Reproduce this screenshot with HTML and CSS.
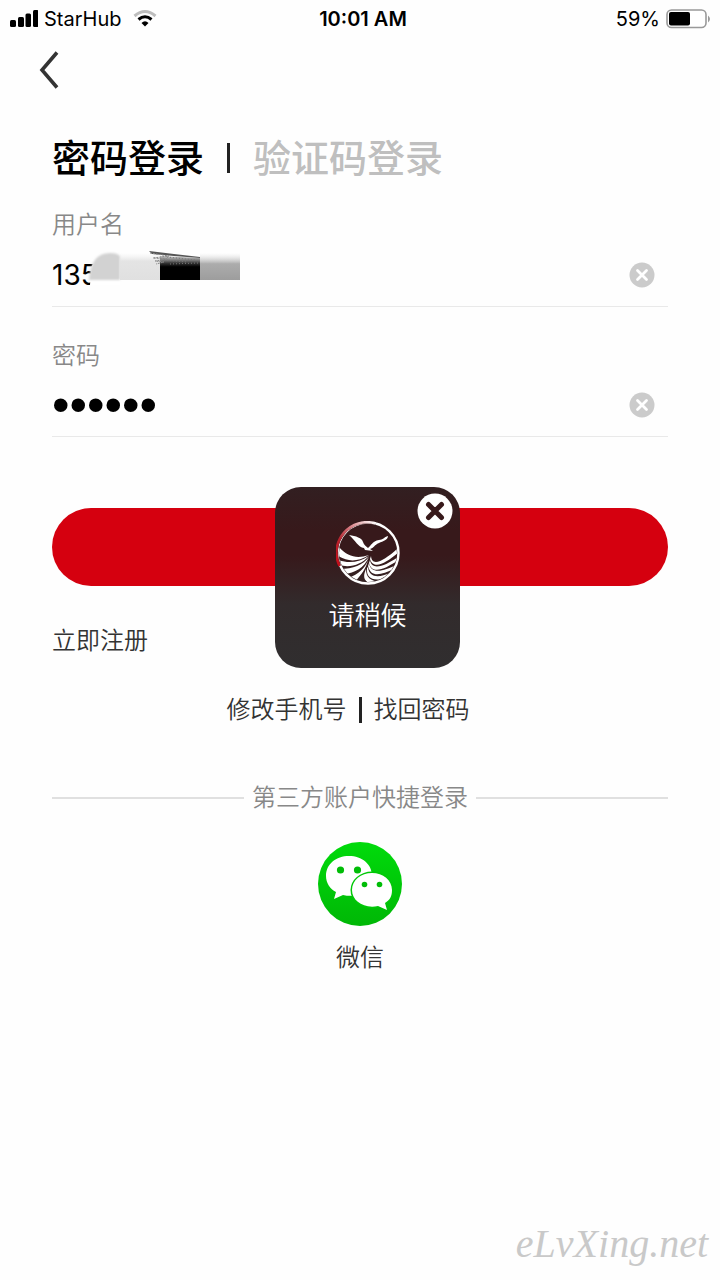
FILE: index.html
```html
<!DOCTYPE html>
<html lang="zh-CN">
<head>
<meta charset="utf-8">
<meta name="viewport" content="width=device-width, initial-scale=1">
<title>密码登录</title>
<link rel="stylesheet" href="styles.css">
</head>
<body>
<div class="screen">
  <header class="status">
    <div class="status-left">
      <svg class="signal" width="30" height="20" viewBox="0 0 30 20" aria-hidden="true"><rect x="2" y="11" width="6" height="7" rx="1.500"/><rect x="10" y="8" width="6" height="10" rx="1.500"/><rect x="17.500" y="4.500" width="5.500" height="13.500" rx="1.500"/><rect x="25" y="1" width="5.500" height="17" rx="1.500"/></svg>
      <span>StarHub</span>
      <svg class="wifi" width="24" height="20" viewBox="0 0 24 20" fill="none" stroke-width="3" aria-hidden="true"><path d="M1.500 7Q12-2 22.500 7" stroke="#bdbdbd"/><path d="M5.500 10.500Q12 5 18.500 10.500" stroke="#000"/><path d="M8.500 14Q12 10.500 15.500 14L12 17.500Z" fill="#000"/></svg>
    </div>
    <strong class="time">10:01 AM</strong>
    <div class="status-right">
      <span>59%</span>
      <svg width="46" height="20" viewBox="0 0 46 20" aria-hidden="true"><rect x="1" y="1" width="39" height="17.500" rx="4.500" fill="#fff" stroke="#999" stroke-width="1.600"/><rect x="3" y="3" width="21" height="13.500" rx="2" fill="#000"/><path d="M42 6.500Q46 10 42 13.500Z" fill="#999"/></svg>
    </div>
  </header>

  <nav class="nav">
    <button class="back" type="button" aria-label="返回">
      <svg width="20" height="38" viewBox="0 0 20 38" fill="none" stroke="#333" stroke-width="3.600" aria-hidden="true"><path d="M18 1.500L3 19L18 36.500"/></svg>
    </button>
  </nav>

  <main class="content">
    <div class="tabs">
      <button class="tab tab-active" type="button">密码登录</button>
      <span class="tab-rule"></span>
      <button class="tab" type="button">验证码登录</button>
    </div>

    <form class="form">
      <div class="field field-user">
        <label for="user">用户名</label>
        <div class="field-row">
          <input id="user" type="text" value="135" autocomplete="off">
          <svg class="redaction" width="156" height="36" viewBox="0 0 156 36" aria-hidden="true">
            <defs>
              <linearGradient id="soft" x1="0" y1="0" x2="0" y2="1"><stop offset="0" stop-color="#eee" stop-opacity="0"/><stop offset=".3" stop-color="#e4e4e4"/><stop offset="1" stop-color="#e0e0e0"/></linearGradient>
              <linearGradient id="grey" x1="0" y1="0" x2="0" y2="1"><stop offset="0" stop-color="#ddd" stop-opacity="0"/><stop offset=".4" stop-color="#acacac"/><stop offset="1" stop-color="#9d9d9d"/></linearGradient>
              <linearGradient id="dark" x1="0" y1="0" x2="0" y2="1"><stop offset="0" stop-color="#888" stop-opacity=".5"/><stop offset=".3" stop-color="#333"/><stop offset=".45" stop-color="#000"/></linearGradient>
              <filter id="feather" x="-10%" y="-10%" width="120%" height="120%"><feGaussianBlur stdDeviation=".8"/></filter>
            </defs>
            <path d="M6 36L7 19Q13 2 26 3Q34 4 36 10V36Z" fill="#fff"/>
            <path d="M5 31Q7 3 27 4Q33 4 36 7V31Z" fill="#d2d2d2" filter="url(#feather)"/>
            <rect x="36" y="4" width="40" height="27" fill="url(#soft)"/>
            <path d="M76 31V7L116 9V31Z" fill="url(#dark)"/>
            <path d="M65 2L90 5L116 8V9L90 7L68 5Z" fill="#555"/>
            <path d="M66 4L85 7L69 9L83 10L71 12L80 13L72 15" fill="none" stroke="#888" stroke-dasharray="2 1"/>
            <path d="M83 8L111 11M80 11L103 13M86 15L114 14" stroke="#777" stroke-dasharray="1 2"/>
            <rect x="116" y="4" width="40" height="27" fill="url(#grey)"/>
          </svg>
          <button class="clear" type="button" aria-label="清除用户名"><svg width="26" height="26" viewBox="0 0 26 26" aria-hidden="true"><circle cx="13" cy="13" r="12.500" fill="#cbcbcb"/><path d="M8.500 8.500L17.500 17.500M17.500 8.500L8.500 17.500" stroke="#fff" stroke-width="2.800" stroke-linecap="round"/></svg></button>
        </div>
      </div>
      <div class="field">
        <label for="pass">密码</label>
        <div class="field-row">
          <input id="pass" class="password" type="password" value="123456" autocomplete="off">
          <button class="clear" type="button" aria-label="清除密码"><svg width="26" height="26" viewBox="0 0 26 26" aria-hidden="true"><circle cx="13" cy="13" r="12.500" fill="#cbcbcb"/><path d="M8.500 8.500L17.500 17.500M17.500 8.500L8.500 17.500" stroke="#fff" stroke-width="2.800" stroke-linecap="round"/></svg></button>
        </div>
      </div>
      <div class="submit-area">
        <button class="submit" type="button" aria-label="登录"></button>
        <div class="loading" role="dialog" aria-label="请稍候">
          <button class="loading-close" type="button" aria-label="关闭"><svg width="36" height="36" viewBox="0 0 36 36" aria-hidden="true"><circle cx="18" cy="18" r="17.500" fill="#fff"/><path d="M11.500 11.500L24.500 24.500M24.500 11.500L11.500 24.500" stroke="#37191b" stroke-width="5" stroke-linecap="round"/></svg></button>
          <svg class="emblem" width="64" height="64" viewBox="0 0 64 64" aria-hidden="true">
            <defs>
              <linearGradient id="arc" x1="1" y1="0" x2="0" y2="1"><stop offset="0" stop-color="#fff"/><stop offset=".35" stop-color="#dc8a90"/><stop offset=".65" stop-color="#b3242e"/><stop offset="1" stop-color="#c50d19"/></linearGradient>
              <clipPath id="disc"><circle cx="32" cy="32" r="29"/></clipPath>
            </defs>
            <circle cx="32" cy="32" r="30.500" fill="none" stroke="#fff" stroke-width="2.400"/>
            <path d="M3.500 45A30.500 30.500 0 0 1 40 2.600" fill="none" stroke="#37191b" stroke-width="3"/>
            <path d="M3.500 45A30.500 30.500 0 0 1 40 2.600" fill="none" stroke="url(#arc)" stroke-width="2.600"/>
            <path d="M13 14C20 15 26 17 27 21C28 24 30 25 32 27C35 25 36 20 43 19C47 19 48 16 52 15C52 19 47 20 43 22C38 24 38 27 34 28L37 30L29 29L28 27C22 26 20 20 13 14Z" fill="#fff"/>
            <g clip-path="url(#disc)" fill="#fff">
              <path d="M3 26C12 36 21 38 33 34C20 42 11 40 2 35Z"/>
              <path d="M2 39C13 43 24 41 33 35C25 44 14 47 3 44Z"/>
              <path d="M4 48C17 48 27 44 33 36C28 47 19 52 8 53Z"/>
              <path d="M12 57C23 53 29 47 32 39C30 48 25 54 18 62Z"/>
              <path d="M35 35C36 47 49 39 62 27V32C51 41 38 50 34 38Z"/>
              <path d="M34 39C36 51 50 44 62 36L61 40C49 48 36 54 33 42Z"/>
              <path d="M33 42C35 54 48 50 60 44L58 48C45 54 35 57 32 45Z"/>
              <path d="M32 46C33 57 43 57 54 52L50 57C37 61 30 57 31 47Z"/>
              <path d="M30 48C30 57 35 60 44 61L35 63C27 60 27 55 30 48Z"/>
            </g>
          </svg>
          <span class="loading-text">请稍候</span>
        </div>
      </div>
    </form>

    <a class="register" href="#">立即注册</a>
    <div class="help">
      <a class="help-start" href="#">修改手机号</a>
      <span class="help-rule"></span>
      <a href="#">找回密码</a>
    </div>

    <div class="divider"><span>第三方账户快捷登录</span></div>
    <a class="wechat" href="#">
      <svg width="84" height="84" viewBox="0 0 84 84" aria-hidden="true">
        <defs><linearGradient id="green" x1="0" y1="0" x2="0" y2="1"><stop offset="0" stop-color="#00db0b"/><stop offset="1" stop-color="#00b706"/></linearGradient></defs>
        <circle cx="42" cy="42" r="42" fill="url(#green)"/>
        <path d="M31 14C18 14 8 22 8 34C8 41 12 47 18 50L16 57L25 53C43 57 54 46 54 34C54 22 44 14 31 14Z" fill="#fff"/>
        <ellipse cx="54" cy="48" rx="21.500" ry="18.500" fill="#00c807"/>
        <path d="M54 31C43 31 34 38 34 48C34 59 46 67 60 64L69 68L67 61C72 58 74 54 74 48C74 38 65 31 54 31Z" fill="#fff"/>
        <g fill="#00bd07"><circle cx="22.500" cy="28" r="3.600"/><circle cx="39.500" cy="28" r="3.600"/><circle cx="46.500" cy="42.500" r="2.800"/><circle cx="61.500" cy="42.500" r="2.800"/></g>
      </svg>
      <span>微信</span>
    </a>
  </main>
  <footer class="watermark">eLvXing.net</footer>
</div>
</body>
</html>
```

FILE: styles.css
```css
* {
  box-sizing: border-box;
}

body {
  margin: 0;
  background: #fefefe;
  color: #333;
  font-family: "Inter", "Noto Sans CJK SC", sans-serif;
  font-size: 24px;
  font-weight: 350;
  line-height: 36px;
}

button {
  padding: 0;
  border: 0;
  background: none;
  font: inherit;
  color: inherit;
}

a {
  color: inherit;
  text-decoration: none;
}

svg {
  display: block;
  flex: none;
}

.screen {
  display: flex;
  flex-direction: column;
  min-height: 100vh;
}

.status {
  display: grid;
  grid-template-columns: 1fr auto 1fr;
  align-items: center;
  height: 37px;
  padding: 0 8px;
  color: #000;
  font-size: 20px;
  font-weight: 400;
}

.status-left,
.status-right {
  display: flex;
  align-items: center;
  gap: 6px;
}

.status-right {
  justify-content: flex-end;
}

.signal {
  fill: #000;
}

.wifi {
  margin-left: 6px;
}

.time {
  padding-left: 6px;
  font-weight: 600;
}

.nav {
  height: 93px;
  padding: 14px 39px;
}

.content {
  display: flex;
  flex-direction: column;
  padding: 0 52px;
}

.tabs {
  display: flex;
  align-items: center;
  gap: 23px;
  height: 56px;
  margin-bottom: 21px;
}

.tab {
  color: #bfbfbf;
  font-size: 38px;
  font-weight: 500;
  line-height: 56px;
}

.tab-active {
  color: #000;
}

.tab-rule {
  width: 3px;
  height: 30px;
  background: #222;
}

.form {
  display: flex;
  flex-direction: column;
}

.field {
  display: flex;
  flex-direction: column;
  margin-bottom: 31px;
  border-bottom: 1px solid #e9e9e9;
}

.field label {
  color: #888;
}

.field-row {
  position: relative;
  display: flex;
  align-items: center;
  height: 62px;
  padding-right: 13px;
}

.field-user .field-row {
  height: 63px;
}

.field input {
  flex: 1;
  min-width: 0;
  height: 60px;
  padding: 0;
  border: 0;
  outline: 0;
  background: transparent;
  color: #000;
  font: 28px "Inter", sans-serif;
}

.field .password {
  font: 50px "Liberation Sans", sans-serif;
}

.redaction {
  position: absolute;
  top: 6px;
  left: 32px;
}

.submit-area {
  position: relative;
  margin: 40px 0 37px;
}

.submit {
  display: block;
  width: 100%;
  height: 78px;
  border-radius: 39px;
  background: #d5000f;
}

.loading {
  position: absolute;
  top: -21px;
  left: calc(50% - 85px);
  display: flex;
  flex-direction: column;
  align-items: center;
  gap: 13px;
  width: 185px;
  padding: 34px 0;
  border-radius: 26px;
  background: linear-gradient(#321f21, #37191b 24%, #37191b 38%, #322b2c 65%, #302e2f);
}

.loading-close {
  position: absolute;
  top: 6px;
  right: 7px;
}

.loading-text {
  color: #fff;
  font-size: 26px;
}

.register {
  align-self: flex-start;
}

.help {
  display: grid;
  grid-template-columns: 1fr auto 1fr;
  align-items: center;
  gap: 12px;
  margin: 33px 0 52px;
}

.help-start {
  text-align: right;
}

.help-rule {
  width: 3px;
  height: 26px;
  background: #222;
}

.divider {
  display: flex;
  align-items: center;
  gap: 8px;
  color: #888;
}

.divider::before,
.divider::after {
  content: "";
  flex: 1;
  height: 2px;
  background: #e0e0e0;
}

.wechat {
  display: flex;
  flex-direction: column;
  align-items: center;
  align-self: center;
  gap: 14px;
  margin-top: 26px;
}

.watermark {
  margin-top: auto;
  padding: 0 12px 12px;
  color: #c9c9c9;
  font: italic 40px/48px "Liberation Serif", serif;
  text-align: right;
}
```
